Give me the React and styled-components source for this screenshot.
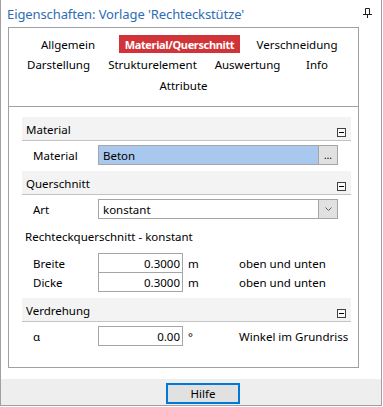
import React from "react";
import styled, { createGlobalStyle } from "styled-components";

const GlobalStyle = createGlobalStyle`
  html, body {
    margin: 0;
    padding: 0;
    background: #fff;
  }
  body {
    font-family: "Noto Sans", "Segoe UI", sans-serif;
    font-size: 11.5px;
    color: #000;
  }
`;

const Window = styled.div`
  width: 382px;
  height: 406px;
  box-sizing: border-box;
  border: 1px solid #a0a0a0;
  border-top: none;
  display: flex;
  flex-direction: column;
  background: #fff;
`;

const TitleBar = styled.div`
  height: 27px;
  display: flex;
  align-items: center;
  padding: 0 9px 0 6px;
`;

const Title = styled.div`
  font-size: 13px;
  color: #2e6db4;
  white-space: nowrap;
  letter-spacing: -0.1px;
`;

const Pin = styled.svg`
  margin-left: auto;
  margin-top: -2px;
`;

const Body = styled.div`
  flex: 1;
  padding: 0 22px 11px 7px;
  display: flex;
`;

const Panel = styled.div`
  flex: 1;
  border: 1px solid #a0a0a0;
  display: flex;
  flex-direction: column;
`;

const TabHeader = styled.div`
  border-bottom: 1px solid #a0a0a0;
  padding-top: 6px;
  height: 72px;
`;

const TabRow = styled.div`
  display: flex;
  align-items: center;
  height: 20.5px;
`;

const Tab = styled.div`
  flex-shrink: 0;
  display: flex;
  justify-content: center;
  align-items: center;
  white-space: nowrap;
  height: 18px;
  width: ${(p) => p.$w}px;
  margin-left: ${(p) => p.$ml}px;
  background: ${(p) => (p.$active ? "#d13438" : "transparent")};
  color: ${(p) => (p.$active ? "#fff" : "#000")};
  font-weight: ${(p) => (p.$active ? 700 : 400)};
  font-size: ${(p) => (p.$active ? "11px" : "inherit")};
  letter-spacing: ${(p) => (p.$active ? "-0.35px" : "normal")};
`;

const Content = styled.div`
  padding: 10px 7px 0 13px;
  display: flex;
  flex-direction: column;
`;

const SectionHeader = styled.div`
  height: 23px;
  background: #f3f3f3;
  border-bottom: 1px solid #c3c3c3;
  display: flex;
  align-items: center;
  padding: 0 5px 0 4px;
  margin-top: ${(p) => (p.$first ? 0 : 6)}px;
`;

const HeaderText = styled.span`
  padding-top: 1px;
`;

const Collapse = styled.svg`
  margin-left: auto;
  align-self: flex-end;
  margin-bottom: 3px;
`;

const FieldRow = styled.div`
  display: flex;
  align-items: center;
  height: 20px;
  margin-top: ${(p) => p.$mt}px;
`;

const Label = styled.div`
  width: 65px;
  padding-left: 11px;
  flex-shrink: 0;
`;

const Field = styled.div`
  box-sizing: border-box;
  height: 20px;
  width: ${(p) => p.$w}px;
  border: 1px solid #a5a5a5;
  background: ${(p) => p.$bg || "#fff"};
  display: flex;
  align-items: center;
`;

const FieldText = styled.div`
  flex: 1;
  padding: 0 ${(p) => (p.$right ? 2 : 0)}px 0 ${(p) => (p.$right ? 0 : 4)}px;
  text-align: ${(p) => (p.$right ? "right" : "left")};
  white-space: nowrap;
`;

const SideButton = styled.div`
  width: 18px;
  height: 18px;
  border-left: 1px solid #a5a5a5;
  background: #e1e1e1;
  display: flex;
  align-items: center;
  justify-content: center;
  font-size: 10px;
  line-height: 1;
`;

const Unit = styled.div`
  width: 51px;
  margin-left: 5px;
  flex-shrink: 0;
`;

const Note = styled.div`
  white-space: nowrap;
`;

const SubTitle = styled.div`
  height: 34px;
  display: flex;
  align-items: center;
  padding-left: 3px;
`;

const Footer = styled.div`
  height: 26px;
  background: #eeeeee;
  display: flex;
  padding: 4px 0 0 165px;
  box-sizing: border-box;
`;

const HelpButton = styled.div`
  width: 74px;
  height: 21px;
  box-sizing: border-box;
  border: 2px solid #0078d7;
  background: #e1e1e1;
  display: flex;
  align-items: center;
  justify-content: center;
`;

const tabRows = [
  [
    { label: "Allgemein", ml: 32, w: 54 },
    { label: "Material/Querschnitt", ml: 24, w: 121, active: true },
    { label: "Verschneidung", ml: 18, w: 78 },
  ],
  [
    { label: "Darstellung", ml: 19, w: 61 },
    { label: "Strukturelement", ml: 21, w: 85 },
    { label: "Auswertung", ml: 20, w: 65 },
    { label: "Info", ml: 27, w: 20 },
  ],
  [{ label: "Attribute", ml: 151, w: 47 }],
];

const CollapseIcon = () => (
  <Collapse width="9" height="9" viewBox="0 0 9 9">
    <rect x="0.5" y="0.5" width="8" height="8" fill="#fafafa" stroke="#404040" />
    <path d="M2 4.5h5" stroke="#000" />
  </Collapse>
);

const Header = ({ children, first }) => (
  <SectionHeader $first={first}>
    <HeaderText>{children}</HeaderText>
    <CollapseIcon />
  </SectionHeader>
);

export default function App() {
  return (
    <>
      <GlobalStyle />
      <Window>
        <TitleBar>
          <Title>Eigenschaften: Vorlage 'Rechteckstütze'</Title>
          <Pin width="9" height="10" viewBox="0 0 9 10">
            <path d="M2.5 0.5h4v6h-4z" fill="none" stroke="#1e1e1e" />
            <path d="M0 6.5h9" stroke="#1e1e1e" />
            <path d="M4.5 7v3" stroke="#1e1e1e" />
          </Pin>
        </TitleBar>
        <Body>
          <Panel>
            <TabHeader>
              {tabRows.map((row, i) => (
                <TabRow key={i}>
                  {row.map((t) => (
                    <Tab key={t.label} $ml={t.ml} $w={t.w} $active={t.active}>
                      {t.label}
                    </Tab>
                  ))}
                </TabRow>
              ))}
            </TabHeader>
            <Content>
              <Header first>Material</Header>
              <FieldRow $mt={4}>
                <Label>Material</Label>
                <Field $w={240} $bg="#a8c8ee">
                  <FieldText>Beton</FieldText>
                  <SideButton>…</SideButton>
                </Field>
              </FieldRow>

              <Header>Querschnitt</Header>
              <FieldRow $mt={4}>
                <Label>Art</Label>
                <Field $w={240}>
                  <FieldText>konstant</FieldText>
                  <SideButton>
                    <svg width="7" height="4" viewBox="0 0 7 4">
                      <path d="M0.5 0.5l3 3 3-3" fill="none" stroke="#606060" />
                    </svg>
                  </SideButton>
                </Field>
              </FieldRow>

              <SubTitle>Rechteckquerschnitt - konstant</SubTitle>
              <FieldRow $mt={0}>
                <Label>Breite</Label>
                <Field $w={85}>
                  <FieldText $right>0.3000</FieldText>
                </Field>
                <Unit>m</Unit>
                <Note>oben und unten</Note>
              </FieldRow>
              <FieldRow $mt={-1}>
                <Label>Dicke</Label>
                <Field $w={85}>
                  <FieldText $right>0.3000</FieldText>
                </Field>
                <Unit>m</Unit>
                <Note>oben und unten</Note>
              </FieldRow>

              <Header>Verdrehung</Header>
              <FieldRow $mt={4}>
                <Label>α</Label>
                <Field $w={85}>
                  <FieldText $right>0.00</FieldText>
                </Field>
                <Unit>°</Unit>
                <Note>Winkel im Grundriss</Note>
              </FieldRow>
            </Content>
          </Panel>
        </Body>
        <Footer>
          <HelpButton>Hilfe</HelpButton>
        </Footer>
      </Window>
    </>
  );
}
